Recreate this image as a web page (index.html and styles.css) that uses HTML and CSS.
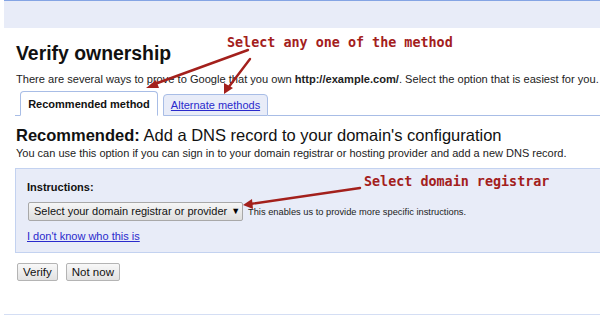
FILE: index.html
```html
<!DOCTYPE html>
<html>
<head>
<meta charset="utf-8">
<link rel="stylesheet" href="styles.css">
</head>
<body>
<div class="page">
  <div class="topband"></div>
  <div class="content">
    <h1 class="title">Verify ownership</h1>
    <p class="intro">There are several ways to prove to Google that you own <b>http://example.com/</b>. Select the option that is easiest for you.</p>
    <div class="tabs">
      <div class="tab-gap"></div>
      <div class="tab active">Recommended method</div>
      <div class="tab inactive"><a href="#">Alternate methods</a></div>
      <div class="tab-rest"></div>
    </div>
    <h2 class="heading"><b>Recommended:</b> Add a DNS record to your domain's configuration</h2>
    <p class="desc">You can use this option if you can sign in to your domain registrar or hosting provider and add a new DNS record.</p>
    <div class="instructions">
      <div class="label">Instructions:</div>
      <div class="select-row">
        <div class="select">Select your domain registrar or provider <span class="caret">▼</span></div>
        <span class="hint">This enables us to provide more specific instructions.</span>
      </div>
      <a class="link" href="#">I don't know who this is</a>
    </div>
    <div class="buttons">
      <button class="btn">Verify</button>
      <button class="btn">Not now</button>
    </div>
  </div>
  <div class="bottomline"></div>
  <div class="note note1">Select any one of the method</div>
  <div class="note note2">Select domain registrar</div>
  <svg class="arrows" width="600" height="318" viewBox="0 0 600 318">
    <g stroke="#a3201c" stroke-width="2.4" fill="none" stroke-linecap="round">
      <line x1="248" y1="50" x2="152" y2="85"/>
      <line x1="250" y1="59" x2="228" y2="88"/>
      <line x1="360" y1="188" x2="250" y2="204"/>
    </g>
    <g fill="#a3201c">
      <polygon points="146,88 156,80 159,88"/>
      <polygon points="224,94 224,83 233,88"/>
      <polygon points="243,205 252,199 253,209"/>
    </g>
  </svg>
</div>
</body>
</html>
```

FILE: styles.css
```css
html, body {
  margin: 0;
  padding: 0;
  background: #ffffff;
}
body {
  font-family: "Liberation Sans", Arial, sans-serif;
  color: #111;
  width: 600px;
  height: 318px;
  overflow: hidden;
}
.page {
  position: relative;
  width: 600px;
  height: 318px;
}
.topband {
  margin-left: 4px;
  height: 27px;
  background: #e8ecf8;
  border-top: 1px solid #84a4e4;
}
.content {
  padding-left: 16px;
}
.title {
  margin: 13px 0 0 0;
  font-size: 19.4px;
  line-height: 24px;
  font-weight: bold;
}
.intro {
  margin: 7px 0 0 0;
  font-size: 11.1px;
  line-height: 14px;
  color: #222;
  white-space: nowrap;
}
.tabs {
  display: flex;
  align-items: flex-end;
  margin-top: 5px;
  margin-left: -1px;
  height: 25px;
}
.tab-gap {
  width: 5px;
  border-bottom: 1px solid #a8bde6;
}
.tab {
  font-size: 11px;
  box-sizing: border-box;
  border: 1px solid #a8bde6;
  border-radius: 4px 4px 0 0;
  display: flex;
  align-items: center;
  justify-content: center;
}
.tab.active {
  width: 138px;
  height: 25px;
  font-weight: bold;
  background: #fff;
  border-bottom-color: #fff;
}
.tab.inactive {
  width: 105px;
  height: 22px;
  margin-left: 5px;
  background: #e8ecf8;
}
.tab.inactive a {
  color: #2a2acc;
}
.tab-rest {
  flex: 1;
  border-bottom: 1px solid #a8bde6;
}
.heading {
  margin: 9px 0 0 0;
  font-size: 16.5px;
  line-height: 20px;
  font-weight: normal;
  white-space: nowrap;
}
.desc {
  margin: 1px 0 0 0;
  font-size: 11px;
  line-height: 14px;
  color: #222;
  white-space: nowrap;
}
.instructions {
  margin: 8px 0 0 -1px;
  background: #e8ecf8;
  border: 1px solid #c3d2f0;
  border-right: none;
  height: 85px;
  box-sizing: border-box;
  padding: 11px 0 0 11px;
}
.label {
  font-size: 11px;
  font-weight: bold;
  line-height: 14px;
}
.select-row {
  display: flex;
  align-items: center;
  margin-top: 8px;
}
.select {
  width: 215px;
  height: 19px;
  box-sizing: border-box;
  margin-left: 1px;
  border: 1px solid #a8a8a8;
  border-radius: 2px;
  background: linear-gradient(#f6f6f6, #dedede);
  font-size: 11px;
  line-height: 17px;
  padding-left: 5px;
  color: #111;
  white-space: nowrap;
  flex: none;
}
.caret {
  font-size: 9px;
  margin-left: 1px;
  vertical-align: 1px;
  color: #000;
}
.hint {
  font-size: 9.3px;
  margin-left: 5px;
  color: #222;
  white-space: nowrap;
}
.link {
  display: block;
  margin-top: 8px;
  font-size: 11px;
  line-height: 14px;
  color: #2a2acc;
  width: max-content;
}
.buttons {
  display: flex;
  gap: 8px;
  margin-top: 10px;
  margin-left: 1px;
}
.btn {
  font-family: "Liberation Sans", Arial, sans-serif;
  font-size: 11.5px;
  height: 18px;
  padding: 0 5px;
  border: 1px solid #b4b4b4;
  border-radius: 2px;
  background: linear-gradient(#f8f8f8, #e2e2e2);
  color: #111;
  line-height: 16px;
}
.bottomline {
  position: absolute;
  left: 4px;
  right: 0;
  top: 314px;
  height: 1px;
  background: #d4def4;
}
.note {
  position: absolute;
  font-family: "DejaVu Sans Mono", monospace;
  font-weight: bold;
  font-size: 13.4px;
  color: #a3201c;
  line-height: 16px;
  white-space: nowrap;
}
.note1 {
  left: 227px;
  top: 35px;
}
.note2 {
  left: 364px;
  top: 174px;
}
.arrows {
  position: absolute;
  left: 0;
  top: 0;
}
```
